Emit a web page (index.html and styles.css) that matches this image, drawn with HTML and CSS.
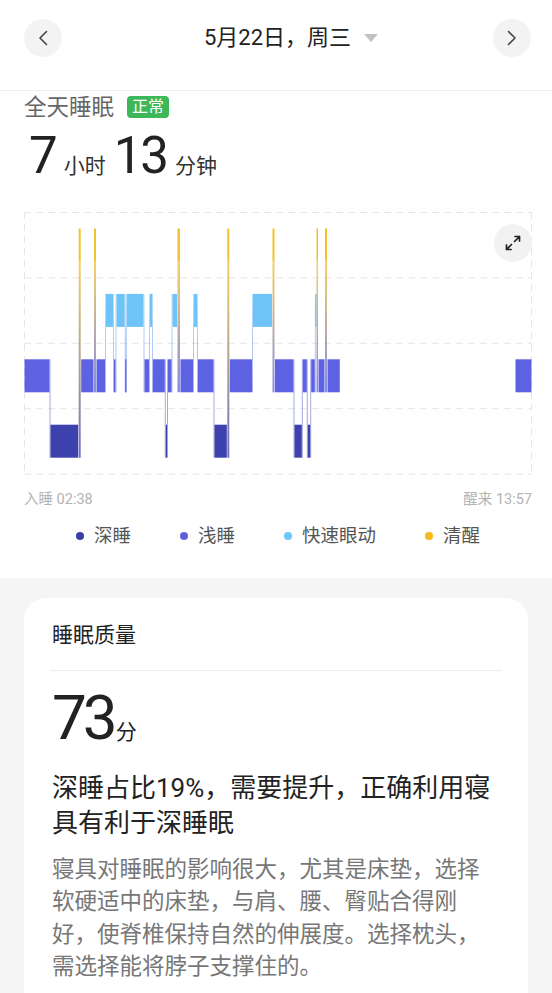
FILE: index.html
```html
<!DOCTYPE html>
<html lang="zh-CN">
<head>
	<meta charset="UTF-8">
	<meta name="viewport" content="width=device-width, initial-scale=1.0">
	<link rel="stylesheet" href="styles.css">
	<title>睡眠</title>
</head>
<body>
	<header class="topbar">
		<button class="round-btn" aria-label="前一天">
			<svg width="20" height="20" viewBox="0 0 20 20"><polyline points="13.5,3.5 7,10 13.5,16.5" fill="none" stroke="#444" stroke-width="1.6" stroke-linecap="round" stroke-linejoin="round"/></svg>
		</button>
		<div class="date">5月22日，周三<span class="caret"></span></div>
		<button class="round-btn" aria-label="后一天">
			<svg width="20" height="20" viewBox="0 0 20 20"><polyline points="6.5,3.5 13,10 6.5,16.5" fill="none" stroke="#444" stroke-width="1.6" stroke-linecap="round" stroke-linejoin="round"/></svg>
		</button>
	</header>

	<section class="summary">
		<div class="summary-title">全天睡眠<span class="tag">正常</span></div>
		<div class="duration"><b>7</b><span>小时</span><b>13</b><span>分钟</span></div>

		<div class="chart">
			<svg id="stages" width="508" height="263" viewBox="0 0 508 263"></svg>
			<button class="expand" aria-label="全屏">
				<svg width="22" height="22" viewBox="0 0 22 22" fill="none" stroke="#222" stroke-width="1.7" stroke-linecap="round" stroke-linejoin="round">
					<path d="M12.5 9.5 L17.5 4.5 M13 4.5 H17.5 V9"/>
					<path d="M9.5 12.5 L4.5 17.5 M4.5 13 V17.5 H9"/>
				</svg>
			</button>
		</div>
		<div class="chart-axis"><span>入睡 02:38</span><span>醒来 13:57</span></div>

		<ul class="legend">
			<li class="deep">深睡</li>
			<li class="light">浅睡</li>
			<li class="rem">快速眼动</li>
			<li class="awake">清醒</li>
		</ul>
	</section>

	<main class="details">
		<div class="card">
			<h2>睡眠质量</h2>
			<hr>
			<div class="score"><b>73</b><span>分</span></div>
			<h3>深睡占比19%，需要提升，正确利用寝具有利于深睡眠</h3>
			<p>寝具对睡眠的影响很大，尤其是床垫，选择软硬适中的床垫，与肩、腰、臀贴合得刚好，使脊椎保持自然的伸展度。选择枕头，需选择能将脖子支撑住的。</p>
		</div>
	</main>

	<script>

const NS = 'http://www.w3.org/2000/svg';
const svg = document.getElementById('stages');
const BAND = 33, ROW = 65.4, LEFT = 24;

const stage = {
	W: { top: 16.5, color: '#f3c22f' },
	R: { top: 16.5 + ROW, color: '#6ec4f8' },
	L: { top: 16.5 + ROW * 2, color: '#5d62e3' },
	D: { top: 16.5 + ROW * 3, color: '#3d41ad' }
};

// stage, start x, end x (page px)
const segs = [
	['L', 24, 50], ['D', 50, 78.7], ['W', 78.7, 80.7], ['L', 80.7, 94], ['W', 94, 96],
	['L', 96, 105.5], ['R', 105.5, 113.5], ['L', 113.5, 116], ['R', 116, 125.2], ['L', 125.2, 126.4],
	['R', 126.4, 144], ['L', 144, 149.5], ['R', 149.5, 152.5], ['L', 152.5, 165.3], ['D', 165.3, 167.5],
	['L', 167.5, 172], ['R', 172, 177.5], ['W', 177.5, 180], ['L', 180, 193.5], ['R', 193.5, 197.5],
	['L', 197.5, 214], ['D', 214, 227.3], ['W', 227.3, 229.3], ['L', 229.3, 252.5], ['R', 252.5, 272.5],
	['W', 272.5, 274.5], ['L', 274.5, 294], ['D', 294, 302.3], ['L', 302.3, 307.3], ['D', 307.3, 310.7],
	['L', 310.7, 315.3], ['R', 315.3, 316.5], ['W', 316.5, 318], ['L', 318, 325], ['W', 325, 327],
	['L', 327, 340.3], ['L', 515, 532]
];

const el = (tag, attrs, parent = svg) => {
	const n = document.createElementNS(NS, tag);
	for (const k in attrs) n.setAttribute(k, attrs[k]);
	parent.appendChild(n);
	return n;
};

const defs = el('defs', {});
const grad = (from, to) => {
	const id = 'g' + from.slice(1) + to.slice(1);
	if (!document.getElementById(id)) {
		const g = el('linearGradient', { id, x1: 0, y1: 0, x2: 0, y2: 1 }, defs);
		el('stop', { offset: 0, 'stop-color': from }, g);
		el('stop', { offset: 1, 'stop-color': to }, g);
	}
	return `url(#${id})`;
};

// dashed grid
for (let i = 0; i < 5; i++) {
	const y = Math.min(0.5 + i * ROW, 262.5);
	el('line', { x1: 0, x2: 508, y1: y, y2: y, class: 'grid' });
}
el('line', { x1: 0.5, x2: 0.5, y1: 0, y2: 263, class: 'grid' });
el('line', { x1: 507.5, x2: 507.5, y1: 0, y2: 263, class: 'grid' });

// transitions between stages
segs.forEach((a, i) => {
	const b = segs[i + 1];
	if (!b || a[2] !== b[1] || a[0] === 'W' || b[0] === 'W') return;
	let up = stage[a[0]], lo = stage[b[0]];
	if (up.top > lo.top) [up, lo] = [lo, up];
	el('rect', { x: a[2] - LEFT - 0.5, y: up.top, width: 1, height: lo.top + BAND - up.top, fill: grad(up.color, lo.color), opacity: 0.5 });
});

// blocks
segs.forEach((s, i) => {
	const [k, x0, x1] = s, st = stage[k];
	if (k === 'W') {
		const nb = [segs[i - 1], segs[i + 1]].filter(Boolean).map(n => stage[n[0]]);
		const lo = nb.reduce((m, n) => n.top > m.top ? n : m, nb[0]);
		el('rect', { x: x0 - LEFT, y: st.top + BAND, width: x1 - x0, height: lo.top - st.top, fill: grad(st.color, lo.color), opacity: 0.75 });
		el('rect', { x: x0 - LEFT, y: st.top, width: x1 - x0, height: BAND, fill: st.color });
		return;
	}
	const w = x1 - x0, inset = w > 2 ? 0.5 : 0;
	el('rect', { x: x0 - LEFT + inset, y: st.top, width: w - inset * 2, height: BAND, fill: st.color });
});

	</script>
</body>
</html>
```

FILE: styles.css
```css
* {
  box-sizing: border-box;
}
html {
  font-family: Roboto, "Noto Sans CJK SC", sans-serif;
  color: #222;
}
body {
  margin: 0;
  background: #fff;
}
button {
  border: none;
  padding: 0;
  font: inherit;
  cursor: pointer;
}

/* top bar */
.topbar {
  display: flex;
  align-items: flex-start;
  justify-content: space-between;
  height: 91px;
  padding: 19px 21px 0 24px;
  border-bottom: 1px solid #f0f0f0;
}
.round-btn {
  display: grid;
  place-items: center;
  width: 38px;
  height: 38px;
  border-radius: 50%;
  background: #f3f3f3;
}
.date {
  display: flex;
  align-items: center;
  font-size: 22px;
  line-height: 38px;
  color: #222;
}
.caret {
  width: 0;
  height: 0;
  margin-left: 13px;
  margin-right: -27px;
  border-left: 7px solid transparent;
  border-right: 7px solid transparent;
  border-top: 8px solid #c2c2c2;
}

/* summary */
.summary {
  padding: 0 20px 29px 24px;
}
.summary-title {
  display: flex;
  align-items: center;
  padding-top: 1px;
  font-size: 22.5px;
  line-height: 30px;
  color: #666;
}
.tag {
  margin-left: 13px;
  padding: 0 5px;
  border-radius: 4px;
  background: #3db858;
  color: #fff;
  font-size: 16px;
  line-height: 22px;
}
.duration {
  margin-top: 6px;
  padding-left: 5px;
  font-size: 51px;
  line-height: 56px;
  white-space: nowrap;
}
.duration b {
  font-weight: 400;
  letter-spacing: -2px;
  color: #222;
}
.duration span {
  margin: 0 8px;
  font-size: 21px;
  line-height: 1;
  color: #333;
}

.chart {
  position: relative;
  width: 508px;
  height: 263px;
  margin-top: 28px;
}
.chart svg {
  display: block;
}
.grid {
  stroke: #e6e6e6;
  stroke-width: 1;
  stroke-dasharray: 7 5;
}
.expand {
  position: absolute;
  top: 12px;
  right: 0;
  display: grid;
  place-items: center;
  width: 38px;
  height: 38px;
  border-radius: 50%;
  background: #f2f2f2;
}

.chart-axis {
  display: flex;
  justify-content: space-between;
  width: 508px;
  margin-top: 15px;
  font-size: 14.5px;
  line-height: 20px;
  color: #b3b3b3;
}

.legend {
  display: flex;
  justify-content: center;
  gap: 49px;
  margin: 13px 0 0;
  padding: 0;
  list-style: none;
  font-size: 18.5px;
  line-height: 26px;
  color: #555;
}
.legend li {
  display: flex;
  align-items: center;
  gap: 10px;
}
.legend li::before {
  width: 8px;
  height: 8px;
  border-radius: 50%;
  background: var(--dot);
  content: '';
}
.legend .deep { --dot: #3c3fa6; }
.legend .light { --dot: #5d60de; }
.legend .rem { --dot: #6fc6f9; }
.legend .awake { --dot: #f5b71b; }

/* quality card */
.details {
  padding: 20px 24px 40px;
  background: #f5f5f5;
}
.card {
  padding: 22px 28px 40px;
  border-radius: 22px;
  background: #fff;
}
.card h2 {
  margin: 0;
  font-size: 21px;
  font-weight: 400;
  line-height: 30px;
  color: #222;
}
.card hr {
  margin: 20px -2px 0;
  border: 0;
  border-top: 1px solid #ececec;
}
.score {
  margin-top: 16px;
  font-size: 62px;
  line-height: 62px;
}
.score b {
  font-weight: 400;
  letter-spacing: -4px;
}
.score span {
  margin-left: 2px;
  font-size: 21px;
  line-height: 1;
}
.card h3 {
  max-width: 448px;
  margin: 22px 0 0;
  font-size: 26px;
  font-weight: 400;
  line-height: 35px;
  color: #222;
}
.card p {
  max-width: 448px;
  margin: 12px 0 0;
  font-size: 22.5px;
  line-height: 32.3px;
  color: #777;
}
```
